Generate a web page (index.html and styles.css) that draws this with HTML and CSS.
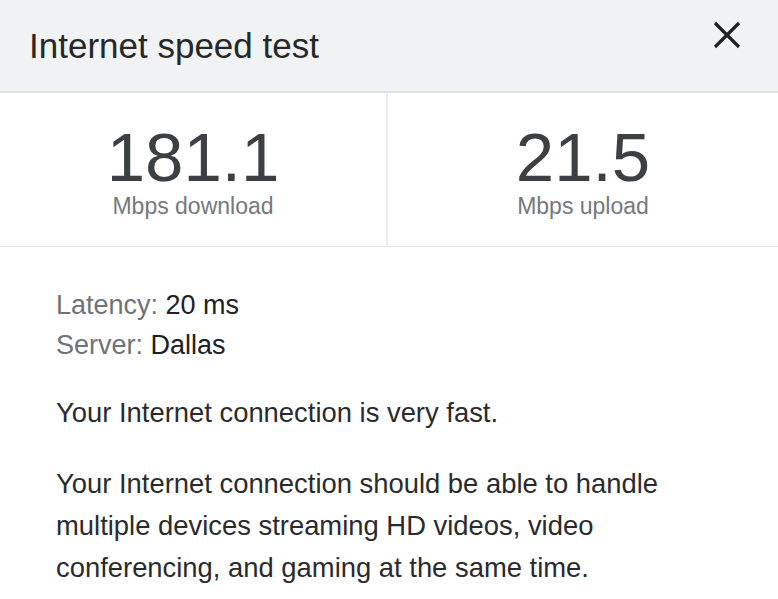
FILE: index.html
```html
<!DOCTYPE html>
<html lang="en">
<head>
<meta charset="utf-8">
<title>Internet speed test</title>
<link rel="stylesheet" href="styles.css">
</head>
<body>
<div class="card">
  <header class="head">
    <h1 class="title">Internet speed test</h1>
    <button class="close" aria-label="Close">
      <svg width="28" height="28" viewBox="0 0 28 28"><path d="M2 2 L26 26 M26 2 L2 26" stroke="#202124" stroke-width="3.2" fill="none"/></svg>
    </button>
  </header>
  <section class="stats">
    <div class="stat">
      <div class="num">181.1</div>
      <div class="unit">Mbps download</div>
    </div>
    <div class="stat">
      <div class="num">21.5</div>
      <div class="unit">Mbps upload</div>
    </div>
  </section>
  <section class="info">
    <div class="meta">
      <div><span class="lbl">Latency:</span> 20 ms</div>
      <div><span class="lbl">Server:</span> Dallas</div>
    </div>
    <p class="msg">Your Internet connection is very fast.</p>
    <p class="msg">Your Internet connection should be able to handle multiple devices streaming HD videos, video conferencing, and gaming at the same time.</p>
  </section>
</div>
</body>
</html>
```
FILE: styles.css
```css
html, body {
  margin: 0;
  padding: 0;
  background: #ffffff;
}
body {
  font-family: "Liberation Sans", Arial, sans-serif;
  color: #202124;
}
.card {
  width: 778px;
  height: 599px;
  overflow: hidden;
}
.head {
  height: 91px;
  background: #f1f2f3;
  border-bottom: 2px solid #dfe0e2;
  display: flex;
  align-items: center;
  justify-content: space-between;
  padding: 0 37px 0 29px;
}
.title {
  margin: 0;
  font-weight: 400;
  font-size: 35px;
  color: #262728;
  line-height: 40px;
}
.close {
  border: 0;
  background: none;
  padding: 0;
  width: 28px;
  height: 28px;
  align-self: flex-start;
  margin-top: 21px;
  display: flex;
}
.stats {
  display: grid;
  grid-template-columns: 388px 1fr;
  border-bottom: 1px solid #e6e7e9;
}
.stat {
  display: flex;
  flex-direction: column;
  align-items: center;
  padding: 32px 0 25px;
}
.stat:first-child {
  border-right: 2px solid #ededee;
}
.num {
  font-size: 69px;
  line-height: 66px;
  color: #3c4043;
}
.unit {
  font-size: 23px;
  line-height: 30px;
  color: #75787c;
}
.info {
  padding: 38px 50px 0 56px;
  font-size: 27px;
  line-height: 40px;
  color: #202124;
}
.lbl {
  color: #6f7276;
}
.msg {
  margin: 27px 0 0;
  font-size: 27.4px;
  line-height: 42px;
  color: #2a2b2d;
}
.msg + .msg {
  margin-top: 29px;
}
```
